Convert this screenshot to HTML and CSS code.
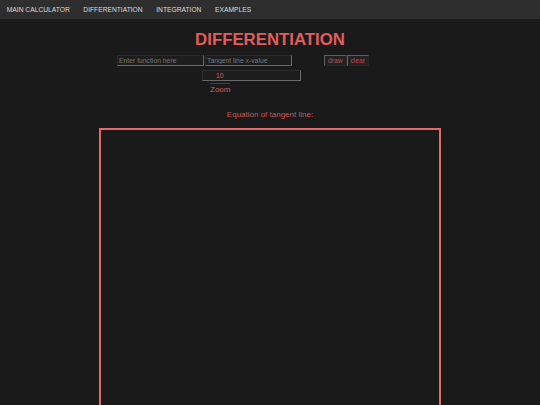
FILE: index.html
```html
<!DOCTYPE html>
<html>
<head>
<meta charset="utf-8">
<link rel="stylesheet" href="styles.css">
</head>
<body>
<nav class="nav">
  <span class="nav-item">MAIN CALCULATOR</span>
  <span class="nav-item">DIFFERENTIATION</span>
  <span class="nav-item">INTEGRATION</span>
  <span class="nav-item">EXAMPLES</span>
</nav>
<h1 class="title">DIFFERENTIATION</h1>
<div class="controls">
  <input class="field" type="text" placeholder="Enter function here">
  <input class="field" type="text" placeholder="Tangent line x-value">
  <div class="buttons">
    <button class="btn">draw</button><button class="btn">clear</button>
  </div>
</div>
<div class="zoom">
  <input class="zoom-field" type="text" value="10">
  <label class="zoom-label">Zoom</label>
</div>
<p class="equation">Equation of tangent line:</p>
<div class="canvas"></div>
</body>
</html>
```
FILE: styles.css
```css
html, body {
  margin: 0;
  padding: 0;
  background: #1a1a1a;
  font-family: "Liberation Sans", Arial, sans-serif;
  overflow: hidden;
}
.nav {
  display: flex;
  height: 19px;
  background: #2e2e2e;
}
.nav-item {
  padding: 0 6.8px;
  line-height: 19px;
  font-size: 6.7px;
  color: #dcdcdc;
}
.title {
  margin: 11px 0 0;
  text-align: center;
  font-size: 16.8px;
  font-weight: bold;
  color: #e35d5d;
  line-height: 19px;
}
.controls {
  display: flex;
  align-items: flex-start;
  margin-top: 6px;
  padding-left: 117px;
}
.field {
  box-sizing: border-box;
  width: 87px;
  height: 11px;
  margin: 0;
  padding: 0 1px;
  background: #1d1d1d;
  border: 1px solid;
  border-color: #2c2c2c #6a6a6a #6a6a6a #2c2c2c;
  font-family: "Liberation Sans", Arial, sans-serif;
  font-size: 6.8px;
  color: #c85a5a;
  outline: none;
}
.field + .field { margin-left: 1px; }
.field::placeholder { color: #777; }
.buttons {
  display: flex;
  margin-left: 32px;
}
.btn {
  box-sizing: border-box;
  height: 11px;
  margin: 0;
  padding: 0 3px;
  background: #222;
  border: 1px solid;
  border-color: #5e5e5e #262626 #262626 #5e5e5e;
  font-family: "Liberation Sans", Arial, sans-serif;
  font-size: 6.7px;
  line-height: 9px;
  color: #c04a4f;
}
.btn + .btn { border-left-color: #6a6a6a; }
.zoom {
  margin-top: 4px;
  padding-left: 202px;
  display: flex;
  flex-direction: column;
  align-items: flex-start;
}
.zoom-field {
  box-sizing: border-box;
  width: 99px;
  height: 11px;
  margin: 0;
  padding: 0 0 0 13px;
  background: #1d1d1d;
  border: 1px solid;
  border-color: #2c2c2c #6a6a6a #6a6a6a #2c2c2c;
  font-family: "Liberation Sans", Arial, sans-serif;
  font-size: 6.8px;
  color: #d06060;
  outline: none;
}
.zoom-label {
  margin: 2px 0 0 8px;
  border-top: 1px solid #6e2c2c;
  padding-top: 1px;
  font-size: 8px;
  line-height: 9px;
  color: #d45c5c;
}
.equation {
  margin: 16px 0 0;
  text-align: center;
  font-size: 8px;
  line-height: 9px;
  color: #c65858;
}
.canvas {
  box-sizing: border-box;
  width: 342px;
  height: 400px;
  margin: 9px 0 0 99px;
  border: 2px solid #e36a6a;
}
```
